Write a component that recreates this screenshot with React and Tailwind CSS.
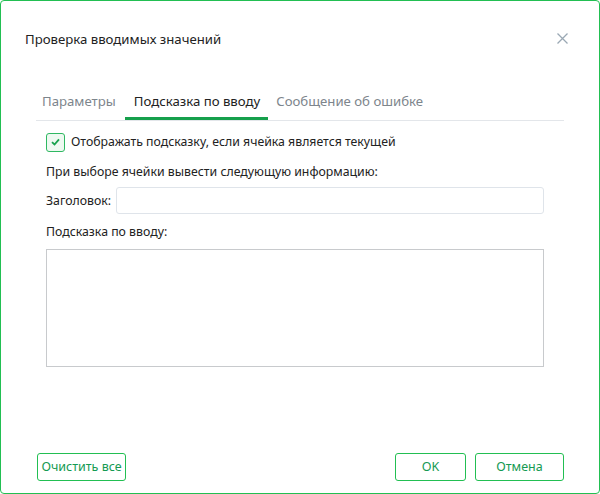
import React from "react";

export default function App() {
  return (
    <div
      className="w-[600px] h-[494px] bg-white border border-[#22bf52] rounded-[4px] flex flex-col text-[#222] box-border"
      style={{ fontFamily: '"Noto Sans", "Open Sans", sans-serif' }}
    >
      <div className="flex items-center justify-between pl-[24px] pr-[31px] pt-[27px] h-[48px]">
        <div className="text-[13.2px] leading-[20px]">Проверка вводимых значений</div>
        <svg width="11" height="11" viewBox="0 0 11 11" className="text-[#9aa8b4]">
          <path d="M0.5 0.5 L10.5 10.5 M10.5 0.5 L0.5 10.5" stroke="currentColor" strokeWidth="1.3" />
        </svg>
      </div>

      <div className="mx-[35px] mt-[41px] flex border-b border-[#e3e6ea] text-[13.2px] leading-[20px]">
        <div className="pl-[6px] pr-[9px] pb-[9px] pt-[1px] text-[#7d858c]">Параметры</div>
        <div className="pl-[9px] pr-[8px] pb-[6px] pt-[1px] border-b-[3px] border-[#16a04c] text-[#222]">Подсказка по вводу</div>
        <div className="px-[8px] pb-[9px] pt-[1px] text-[#7d858c]">Сообщение об ошибке</div>
      </div>

      <div className="flex flex-col pl-[45px] pr-[55px] text-[12.3px] leading-[20px]">
        <div className="flex items-center mt-[11px] h-[20px]">
          <div className="w-[19px] h-[19px] rounded-[3px] border border-[#2fb862] bg-[#eef9f1] flex items-center justify-center">
            <svg width="9" height="8" viewBox="0 0 9 8">
              <path d="M1 4.2 L3.5 6.5 L8 1.3" stroke="#17a24d" strokeWidth="1.8" fill="none" />
            </svg>
          </div>
          <span className="ml-[6px]">Отображать подсказку, если ячейка является текущей</span>
        </div>
        <div className="mt-[10px]">При выборе ячейки вывести следующую информацию:</div>
        <div className="flex items-center mt-[5px]">
          <span className="w-[70px]">Заголовок:</span>
          <div className="flex-1 h-[27px] border border-[#dfe4ea] rounded-[3px]" />
        </div>
        <div className="mt-[8px]">Подсказка по вводу:</div>
        <div className="mt-[7px] h-[118px] border border-[#c8cacd]" />
      </div>

      <div className="flex-1" />

      <div className="flex items-center pl-[36px] pr-[35px] pb-[12px] text-[12.5px]">
        <button className="h-[28px] w-[89px] border border-[#22bf52] rounded-[3px] text-[#159a52]">Очистить все</button>
        <div className="flex-1" />
        <button className="h-[28px] w-[71px] border border-[#22bf52] rounded-[3px] text-[#159a52]">OK</button>
        <button className="h-[28px] w-[89px] ml-[9px] border border-[#22bf52] rounded-[3px] text-[#159a52]">Отмена</button>
      </div>
    </div>
  );
}
